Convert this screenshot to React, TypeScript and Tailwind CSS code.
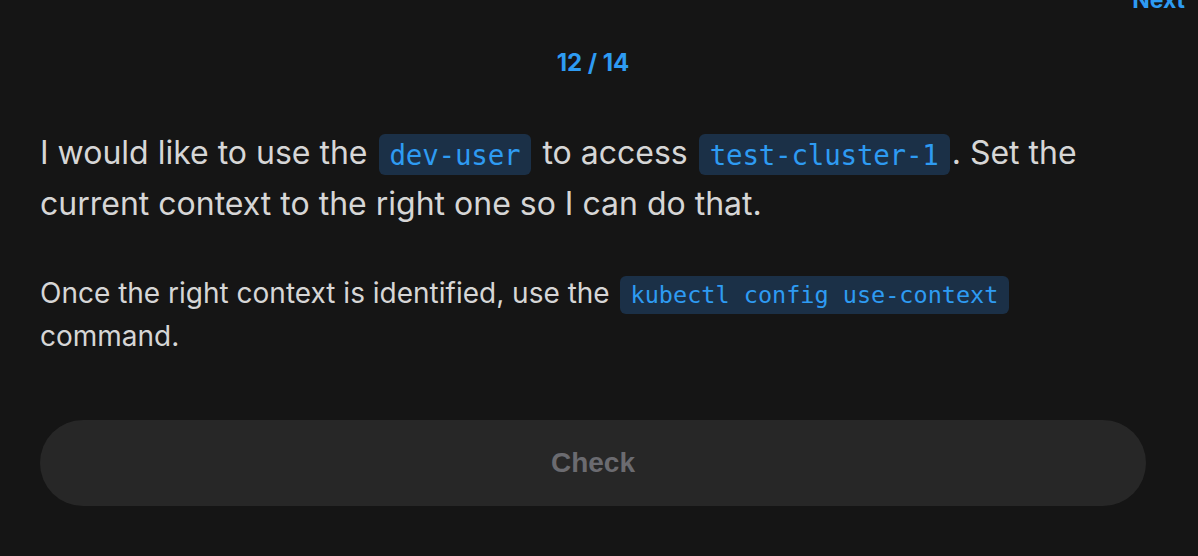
export default function App() {
  const code = 'rounded-[6px] bg-[#1b3047] text-[#2e9bf2] px-[11px] mx-[2px]';
  const mono = { fontFamily: '"DejaVu Sans Mono", "Liberation Mono", monospace' };

  return (
    <div className="min-h-[556px] w-full overflow-hidden bg-[#151515]" style={{ fontFamily: 'Inter, "Noto Sans", sans-serif' }}>
      {/* top bar, scrolled partly off */}
      <div className="flex justify-end pr-[13px] -mt-[14px] h-[28px] leading-[28px]">
        <span className="text-[23px] font-bold text-[#2e9bf2]">Next</span>
      </div>

      <div className="pl-10 pr-[52px]">
        <div className="flex justify-center pt-[34px]">
          <span className="text-[24px] font-bold text-[#2e9bf2] leading-[30px]">12 / 14</span>
        </div>

        <p className="mt-[50px] pr-[40px] text-[32px] leading-[49px] text-[#d6d6d6]">
          I would like to use the <code className={`${code} py-[4.5px] text-[27.5px] tracking-[-0.2px]`} style={mono}>dev-user</code> to access{' '}
          <code className={`${code} py-[4.5px] text-[27.5px] tracking-[-0.2px]`} style={mono}>test-cluster-1</code>. Set the current context to the right
          one so I can do that.
        </p>

        <p className="mt-[45px] pr-[40px] text-[28px] leading-[41px] text-[#d6d6d6]">
          Once the right context is identified, use the{' '}
          <code className={`${code} py-[5px] text-[23.5px]`} style={mono}>kubectl config use-context</code> command.
        </p>

        <button
          className="mt-[63px] w-full h-[86px] rounded-full bg-[#272727] text-[28px] font-bold text-[#6b6b70]"
          style={{ fontFamily: '"Liberation Sans", Arial, sans-serif' }}
        >
          Check
        </button>
      </div>
    </div>
  );
}
